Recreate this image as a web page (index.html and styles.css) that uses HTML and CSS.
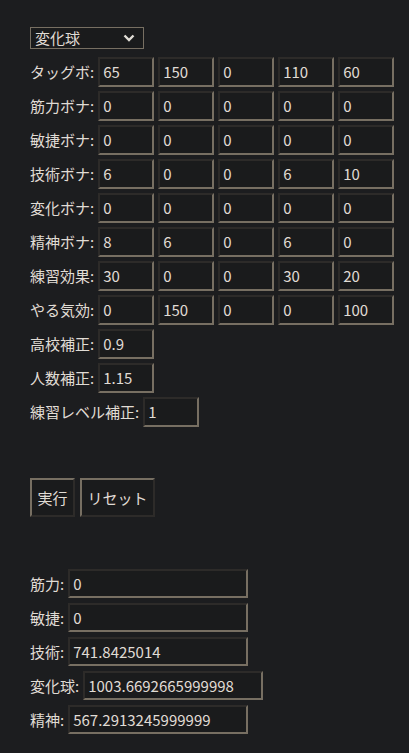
FILE: index.html
```html
<!DOCTYPE html>
<html lang="ja">
<head>
<meta charset="utf-8">
<title>計算</title>
<link rel="stylesheet" href="styles.css">
</head>
<body>
<div class="page">
  <div class="select">
    <span>変化球</span>
    <svg class="chev" width="12" height="8" viewBox="0 0 12 8"><path d="M1.5 1.5 L6 6 L10.5 1.5" fill="none" stroke="#e0ddd6" stroke-width="2.4"/></svg>
  </div>

  <div class="rows">
    <div class="row"><span class="lbl">タッグボ:</span><span class="in">65</span><span class="in">150</span><span class="in">0</span><span class="in">110</span><span class="in">60</span></div>
    <div class="row"><span class="lbl">筋力ボナ:</span><span class="in">0</span><span class="in">0</span><span class="in">0</span><span class="in">0</span><span class="in">0</span></div>
    <div class="row"><span class="lbl">敏捷ボナ:</span><span class="in">0</span><span class="in">0</span><span class="in">0</span><span class="in">0</span><span class="in">0</span></div>
    <div class="row"><span class="lbl">技術ボナ:</span><span class="in">6</span><span class="in">0</span><span class="in">0</span><span class="in">6</span><span class="in">10</span></div>
    <div class="row"><span class="lbl">変化ボナ:</span><span class="in">0</span><span class="in">0</span><span class="in">0</span><span class="in">0</span><span class="in">0</span></div>
    <div class="row"><span class="lbl">精神ボナ:</span><span class="in">8</span><span class="in">6</span><span class="in">0</span><span class="in">6</span><span class="in">0</span></div>
    <div class="row"><span class="lbl">練習効果:</span><span class="in">30</span><span class="in">0</span><span class="in">0</span><span class="in">30</span><span class="in">20</span></div>
    <div class="row"><span class="lbl">やる気効:</span><span class="in">0</span><span class="in">150</span><span class="in">0</span><span class="in">0</span><span class="in">100</span></div>
    <div class="row"><span class="lbl">高校補正:</span><span class="in">0.9</span></div>
    <div class="row"><span class="lbl">人数補正:</span><span class="in">1.15</span></div>
    <div class="row"><span class="lbl">練習レベル補正:</span><span class="in">1</span></div>
  </div>

  <div class="buttons">
    <span class="btn run">実行</span><span class="btn reset">リセット</span>
  </div>

  <div class="rows results">
    <div class="row"><span class="lbl">筋力:</span><span class="in wide">0</span></div>
    <div class="row"><span class="lbl">敏捷:</span><span class="in wide">0</span></div>
    <div class="row"><span class="lbl">技術:</span><span class="in wide">741.8425014</span></div>
    <div class="row"><span class="lbl">変化球:</span><span class="in wide">1003.6692665999998</span></div>
    <div class="row"><span class="lbl">精神:</span><span class="in wide">567.2913245999999</span></div>
  </div>
</div>
</body>
</html>
```

FILE: styles.css
```css
html, body {
  margin: 0;
  padding: 0;
  background: #1c1d1f;
}
body {
  font-family: "Noto Sans CJK JP", "Noto Sans", sans-serif;
  font-size: 15px;
  color: #e0dcd5;
}
.page {
  padding: 27px 30px 0 30px;
}
.select {
  box-sizing: border-box;
  width: 114px;
  height: 22px;
  border: 1px solid #776f62;
  background: #1a1b1c;
  display: flex;
  align-items: center;
  justify-content: space-between;
  padding: 0 8px 0 4px;
  line-height: 20px;
}
.chev {
  display: block;
}
.rows {
  margin-top: 8px;
  display: flex;
  flex-direction: column;
  gap: 4px;
}
.row {
  display: flex;
  align-items: center;
  gap: 4px;
  height: 30px;
}
.lbl {
  flex-shrink: 0;
  white-space: nowrap;
  line-height: 20px;
}
.in {
  flex-shrink: 0;
  box-sizing: border-box;
  width: 56px;
  height: 30px;
  border-style: solid;
  border-width: 2px;
  border-color: #2d2b29 #776f62 #776f62 #2d2b29;
  background: #1a1b1c;
  padding: 0 3px;
  line-height: 26px;
  white-space: nowrap;
  overflow: hidden;
}
.in.wide {
  width: 180px;
}
.buttons {
  margin-top: 51px;
  display: flex;
  gap: 5px;
}
.btn {
  box-sizing: border-box;
  height: 39px;
  border-style: solid;
  border-width: 2px;
  border-color: #776f62 #2d2b29 #2d2b29 #776f62;
  background: #1a1b1c;
  display: flex;
  align-items: center;
  justify-content: center;
  line-height: 20px;
}
.run {
  width: 45px;
}
.reset {
  width: 75px;
}
.results {
  margin-top: 52px;
}
.results .row {
  height: 29px;
}
.results .in {
  height: 29px;
  line-height: 25px;
}
.results.rows {
  gap: 5px;
}
```
